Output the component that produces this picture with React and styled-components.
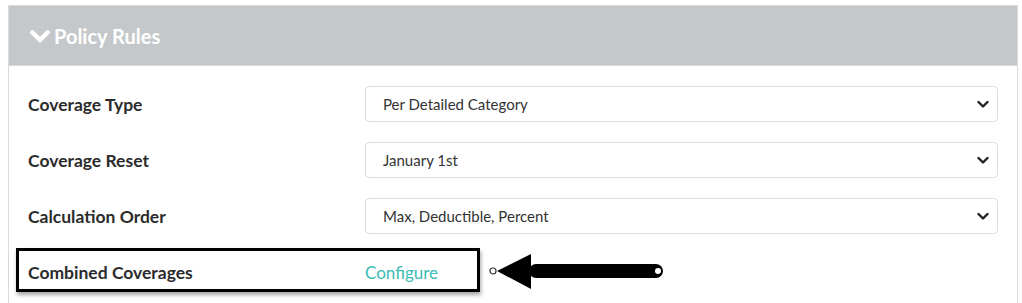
import React from 'react';
import styled, { createGlobalStyle } from 'styled-components';

const GlobalStyle = createGlobalStyle`
  body {
    margin: 0;
    background: #fff;
    font-family: Lato, "Liberation Sans", sans-serif;
  }
`;

const rules = [
  { label: 'Coverage Type', value: 'Per Detailed Category' },
  { label: 'Coverage Reset', value: 'January 1st' },
  { label: 'Calculation Order', value: 'Max, Deductible, Percent' },
];

const Panel = styled.div`
  margin: 5px 0 0 8px;
  width: 1008px;
  border: 1px solid #d8dadc;
  border-bottom: none;
  position: relative;
`;

const Header = styled.div`
  height: 59px;
  background: #c5c8cb;
  display: flex;
  align-items: center;
  gap: 4px;
  padding-left: 21px;
  color: #fff;
  font-weight: 700;
  font-size: 20px;
  border-bottom: 1px solid #d8dadc;
`;

const Body = styled.div`
  padding: 10px 19px 20px 19px;
`;

const Row = styled.div`
  display: grid;
  grid-template-columns: 337px 1fr;
  align-items: center;
  height: 56px;
`;

const Label = styled.div`
  font-size: 17.5px;
  font-weight: 700;
  color: #2b2b2b;
`;

const Select = styled.div`
  height: 34px;
  border: 1px solid #dcdedf;
  border-radius: 4px;
  display: flex;
  align-items: center;
  justify-content: space-between;
  padding: 0 8px 0 17px;
  font-size: 15px;
  color: #333;
`;

const Link = styled.a`
  color: #3bbcb4;
  font-size: 17px;
  text-decoration: none;
`;

const Highlight = styled.div`
  position: absolute;
  box-sizing: border-box;
  left: 7px;
  top: 242px;
  width: 464px;
  height: 44px;
  border: 3px solid #000;
  box-shadow: 1px 3px 4px rgba(0, 0, 0, 0.35);
  pointer-events: none;
`;

const Pointer = styled.svg`
  position: absolute;
  left: 478px;
  top: 248px;
`;

const HeaderChevron = () => (
  <svg width="20" height="14" viewBox="0 0 20 14">
    <path d="M2.5 3.5 L10 11 L17.5 3.5" fill="none" stroke="#fff" strokeWidth="4.5" strokeLinecap="round" strokeLinejoin="round" />
  </svg>
);

const SelectChevron = () => (
  <svg width="12" height="9" viewBox="0 0 12 9">
    <path d="M1.5 2 L6 6.5 L10.5 2" fill="none" stroke="#222" strokeWidth="2.4" strokeLinecap="round" strokeLinejoin="round" />
  </svg>
);

export default function App() {
  return (
    <>
      <GlobalStyle />
      <Panel>
        <Header>
          <HeaderChevron />
          Policy Rules
        </Header>
        <Body>
          {rules.map((r) => (
            <Row key={r.label}>
              <Label>{r.label}</Label>
              <Select>
                {r.value}
                <SelectChevron />
              </Select>
            </Row>
          ))}
          <Row>
            <Label>Combined Coverages</Label>
            <div>
              <Link href="#">Configure</Link>
            </div>
          </Row>
        </Body>
        <Highlight />
        <Pointer width="190" height="36" viewBox="0 0 190 36">
          <rect x="42" y="10" width="134" height="14" rx="7" fill="#000" />
          <polygon points="10,17 44,0 44,35" fill="#000" />
          <circle cx="6" cy="17" r="3" fill="#fff" stroke="#333" strokeWidth="1.2" />
          <circle cx="171" cy="17" r="3" fill="#fff" />
        </Pointer>
      </Panel>
    </>
  );
}
